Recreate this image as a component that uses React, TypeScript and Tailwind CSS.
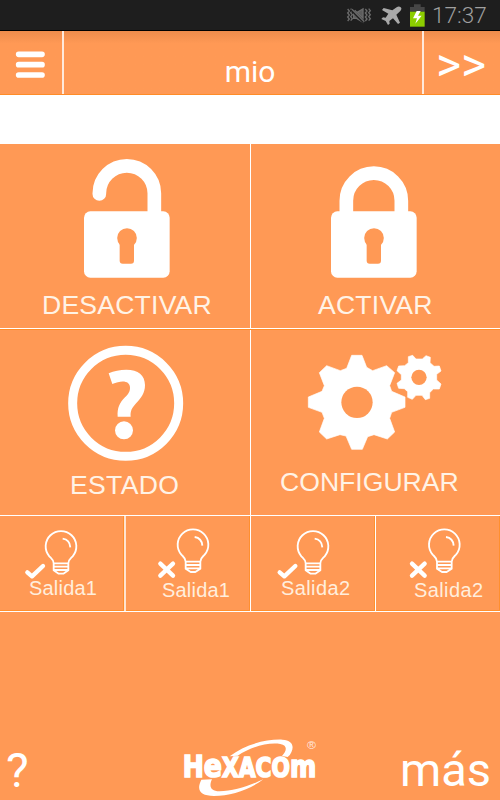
import React from 'react';

const BIG_GEAR =
  'M245 76 L276 76 L290 112 L308 122 L350 107 L374 128 L359 167 L365 184 L405 201 L405 232 L365 247 L359 265 L374 306 L352 327 L312 314 L293 320 L277 358 L245 358 L228 318 L210 314 L170 327 L148 306 L163 265 L156 247 L115 232 L115 201 L156 184 L163 167 L148 128 L170 107 L211 122 L230 115 Z';
const SMALL_GEAR =
  'M415 80 L428 76 L438 87 L457 87 L468 77 L481 82 L480 98 L492 109 L508 108 L513 123 L500 133 L500 150 L513 162 L508 177 L490 177 L479 188 L479 205 L466 209 L456 196 L438 196 L427 208 L413 202 L413 185 L403 176 L386 175 L381 160 L394 150 L394 134 L381 122 L386 108 L404 107 L415 98 Z';

interface LockProps {
  viewBox: string;
  shackle: string;
  bodyX: number;
}

const Lock: React.FC<LockProps> = ({ viewBox, shackle, bodyX }) => (
  <svg viewBox={viewBox} className="h-[146px] w-full shrink-0">
    <path d={shackle} fill="none" stroke="#fff" strokeWidth="41" strokeLinecap="round" />
    <rect x={bodyX} y="199" width="257" height="199" rx="19" fill="#fff" />
    <circle cx={bodyX + 129} cy="279" r="29.5" fill="#ff9955" />
    <rect x={bodyX + 107} y="280" width="43" height="76" rx="9" fill="#ff9955" />
  </svg>
);

const StatusBar = () => (
  <div className="flex h-[31px] shrink-0 items-center border-b border-black bg-[#1e1e1e]">
    <svg viewBox="0 0 282 90" className="ml-[337px] h-[30px] w-[94px] shrink-0">
      <g transform="translate(-21 0)" fill="none" stroke="#6b6b6b" strokeWidth="4">
        <path d="M53 27 l5 6 -5 6 5 6 -5 6 5 6 -5 6 M62 26 l5 6 -5 6 5 6 -5 6 5 6 -5 6 M106 27 l5 6 -5 6 5 6 -5 6 5 6 -5 6 M116 26 l5 6 -5 6 5 6 -5 6 5 6 -5 6" />
        <path d="M71 38 h9 l19 -11 v28 l-25 -24 M71 38 v17 h9 l18 11 v-6" fill="#5c5c5c" />
        <path d="M64 29 L101 66" stroke="#1e1e1e" strokeWidth="8" />
        <path d="M66 28 L103 65" />
      </g>
      <path
        d="M191 21 C195 23 193 29 190 32 L178 43 L189 67 L183 71 L168 54 L157 62 L158 70 L153 74 L146 62 L133 56 L138 51 L146 52 L154 40 L135 29 L140 23 L166 30 L179 21 C183 18 188 18 191 21 Z"
        fill="#a9a9a9"
        transform="translate(0 1)"
      />
      <path d="M219 21 H231 V13 H251 V21 H263 V35 H219 Z" fill="#464646" />
      <path d="M219 35 H263 V80 H219 Z" fill="#8ccd00" />
      <path d="M239 33 L228 55 H240 L235 71 L254 47 H243 L251 33 Z" fill="#fff" />
    </svg>
    <span className="ml-[1px] text-[22.5px] leading-[30px] font-light text-[#a0a0a0]">17:37</span>
  </div>
);

const Header = () => (
  <div className="flex h-16 shrink-0 border-b border-[#ff8c28] bg-gradient-to-b from-[#ee8c4c] via-[#ff9955] via-20% to-[#ff9955] text-white">
    <div className="flex w-16 justify-end border-r-2 border-[#ffe9db]">
      <svg viewBox="0 0 186 192" className="h-16 w-[62px]">
        <path d="M56 72 H126 M56 103 H126 M56 134 H126" transform="translate(0 -2)" stroke="#fff" strokeWidth="17" strokeLinecap="round" />
      </svg>
    </div>
    <div className="flex-1 pt-[23px] pl-[14px] text-center text-[30px] leading-9">mio</div>
    <div className="w-[78px] border-l-2 border-[#ffe9db] pl-[12px] text-[48px] leading-[68px]">&gt;&gt;</div>
  </div>
);

interface BulbTileProps {
  className: string;
  viewBox: string;
  cx: number;
  cy: number;
  on: boolean;
  markX: number;
  label: string;
  labelClass: string;
}

const BulbTile: React.FC<BulbTileProps> = ({ className, viewBox, cx, cy, on, markX, label, labelClass }) => (
  <div className={`flex flex-col bg-[#ff9955] shadow-[inset_-1px_-1px_0_#ff8f2e] ${className}`}>
    <svg viewBox={viewBox} className="h-[62px] w-full shrink-0 overflow-visible">
      <g transform={`translate(${cx} ${cy})`} fill="none" stroke="#fff" strokeWidth="5.5" strokeLinejoin="round">
        <path d="M-22 45 C-22 35 -27 32 -35 24 A46 46 0 1 1 35 24 C27 32 22 35 22 45 V66 L7 76 H-7 L-22 66 Z M-22 45 H22 M-20 55 H20 M-22 65 H22" />
        <path d="M5 -29 C20 -27 27 -17 28 -3" />
      </g>
      {on ? (
        <path d={`M${markX} 187 l14 12 33 -31`} fill="none" stroke="#fff" strokeWidth="13" strokeLinecap="round" strokeLinejoin="round" />
      ) : (
        <path d={`M${markX} 161 l38 36 m0 -36 l-38 36`} fill="none" stroke="#fff" strokeWidth="13" strokeLinecap="round" />
      )}
    </svg>
    <span className={`font-['Liberation_Sans',sans-serif] text-[20px] leading-5 tracking-[0.2px] text-[#ffeedd] ${labelClass}`}>{label}</span>
  </div>
);

const Logo = () => (
  <svg viewBox="0 0 480 210" className="h-[70px] w-40 shrink-0" fill="#fff">
    <path d="M179 79 C225 43 290 27 337 29 C367 31 373 48 364 67 Q360 77 353 81 L336 78 C350 62 354 47 331 42 C291 36 239 53 203 77 Z" />
    <path d="M94 149 L126 148 C116 169 122 184 148 184 C190 184 237 168 280 148 C237 180 182 198 132 198 C91 198 78 181 94 149 Z" />
    <text
      x="38"
      y="141"
      textLength="401"
      lengthAdjust="spacingAndGlyphs"
      className="font-['DejaVu_Sans',sans-serif] font-bold"
      stroke="#fff"
      strokeWidth="5"
    >
      <tspan fontSize="92">H</tspan>
      <tspan fontSize="98">e</tspan>
      <tspan fontSize="79">XACO</tspan>
      <tspan fontSize="92">m</tspan>
    </text>
    <text x="411" y="56" fontSize="33" fillOpacity="0.8" className="font-['Liberation_Sans',sans-serif]" textLength="27" lengthAdjust="spacingAndGlyphs">®</text>
  </svg>
);

const labelBase = "font-['Liberation_Sans',sans-serif] text-[26.6px] leading-[30px] text-[#fff3e6] whitespace-nowrap";

export default function App() {
  return (
    <div className="flex h-[800px] w-[500px] flex-col overflow-hidden bg-[#ff9955] font-['Roboto',sans-serif]">
      <StatusBar />
      <Header />
      <div className="h-[49px] shrink-0 bg-white" />

      <div className="grid h-[185px] shrink-0 grid-cols-[251px_249px] border-b border-white">
        <div className="flex flex-col border-r border-white">
          <Lock viewBox="-90 -3 750 438" bodyX={162} shackle="M208 147 V145 A82.5 82.5 0 0 1 373 145 V215" />
          <span className={`pl-[42px] tracking-[0.2px] ${labelBase}`}>DESACTIVAR</span>
        </div>
        <div className="flex flex-col">
          <Lock viewBox="-117 -3 747 438" bodyX={123} shackle="M169 215 V167 A82.5 82.5 0 0 1 334 167 V215" />
          <span className={`pl-[67px] tracking-[0.2px] ${labelBase}`}>ACTIVAR</span>
        </div>
      </div>

      <div className="grid h-[187px] shrink-0 grid-cols-[251px_249px] border-t border-b border-t-[#ff8c28] border-b-white">
        <div className="flex flex-col border-r border-white">
          <svg viewBox="-120 0 750 420" className="h-[140px] w-full shrink-0">
            <circle cx="257" cy="220" r="159" fill="none" stroke="#fff" strokeWidth="27" />
            <path
              d="M206 130 Q230 119 259 119 C295 119 315 136 315 165 C315 190 303 204 289 219 C274 235 271 244 272 260 H233 C231 234 239 218 255 202 C267 190 270 183 270 173 C270 152 246 149 217 162 Z"
              fill="#fff"
            />
            <circle cx="252" cy="301" r="27" fill="#fff" />
          </svg>
          <span className={`pl-[70px] tracking-[0.3px] ${labelBase}`}>ESTADO</span>
        </div>
        <div className="flex flex-col">
          <svg viewBox="-57 0 747 411" className="h-[137px] w-full shrink-0">
            <path d={BIG_GEAR} fill="#fff" stroke="#fff" strokeWidth="2" strokeLinejoin="round" />
            <circle cx="261" cy="217" r="47" fill="#ff9955" />
            <path d={SMALL_GEAR} fill="#fff" stroke="#fff" strokeWidth="2" strokeLinejoin="round" />
            <circle cx="447" cy="142" r="23" fill="#ff9955" />
          </svg>
          <span className={`pl-[29px] ${labelBase}`}>CONFIGURAR</span>
        </div>
      </div>

      <div className="grid h-24 shrink-0 grid-cols-[124px_126px_126px_124px] border-b border-white">
        <BulbTile className="" viewBox="0 18 372 186" cx={183} cy={115} on markX={82} label="Salida1" labelClass="pl-[29px]" />
        <BulbTile className="border-l-2 border-[#ffe3d0]" viewBox="378 18 372 186" cx={579} cy={110} on={false} markX={481} label="Salida1" labelClass="pl-[36px] pt-[2px]" />
        <BulbTile className="border-x border-white" viewBox="3 18 372 186" cx={189} cy={115} on markX={89} label="Salida2" labelClass="pl-[30px] tracking-[0.4px]" />
        <BulbTile className="" viewBox="378 18 372 186" cx={583} cy={110} on={false} markX={486} label="Salida2" labelClass="pl-[38px] pt-[2px] tracking-[0.4px]" />
      </div>

      <div className="flex flex-1 items-end pr-[9px] pl-[6px] text-[48px] leading-[58px] text-white">
        <span className="w-[164px] shrink-0">?</span>
        <Logo />
        <span className="flex-1 text-right text-[47px] leading-[60px]">más</span>
      </div>
    </div>
  );
}
